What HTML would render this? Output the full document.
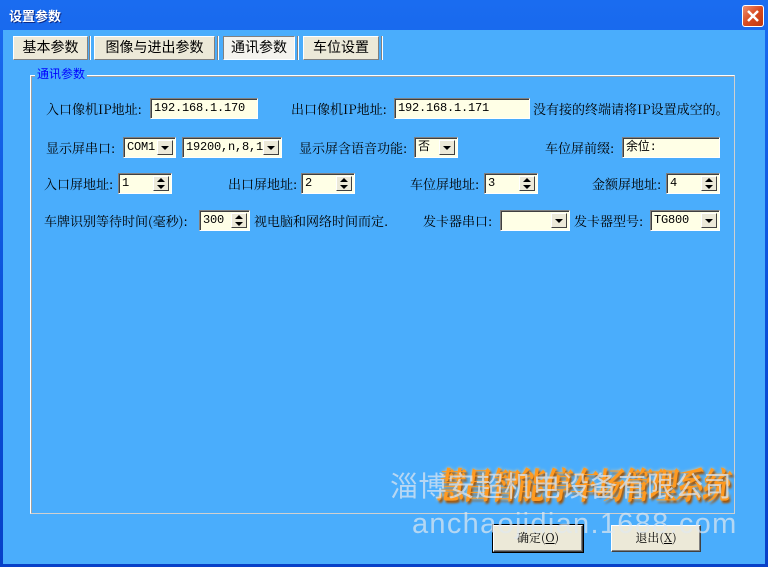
<!DOCTYPE html>
<html><head><meta charset="utf-8">
<style>
*{margin:0;padding:0;box-sizing:border-box}
body{width:768px;height:567px;overflow:hidden;background:#0842d8;font-family:"Liberation Sans","Noto Serif CJK SC","Noto Sans CJK SC",sans-serif;font-size:12px;position:relative}
.win{position:absolute;left:0;top:0;width:768px;height:567px;background:linear-gradient(#1a6cf0,#0a4fd8 60%,#0840c8);}
.title{position:absolute;left:9px;top:6px;color:#fff;font-weight:bold;font-size:13px;font-family:"Liberation Sans","Noto Sans CJK SC",sans-serif;text-shadow:1px 1px #0a2a8a}
.close{position:absolute;left:742px;top:5px;width:22px;height:22px;border:1px solid #fff;border-radius:3px;background:linear-gradient(135deg,#f09070,#d84a20 50%,#c03810);}
.close svg{position:absolute;left:3px;top:3px}
.client{position:absolute;left:3px;top:30px;width:762px;height:534px;background:#4aadfc}
.lbl{position:absolute;white-space:nowrap;color:#000;font-family:"Noto Serif CJK SC","Liberation Serif",serif;font-size:13px;line-height:14px}
.tab{position:absolute;top:36px;height:24px;background:#ece9d8;border:1px solid;border-color:#fff #808080 #808080 #fff;font-family:"Noto Sans CJK SC",sans-serif;font-size:14px;line-height:20px;text-align:center;color:#000}
.tab.sel{border-color:#808080 #fff #fff #808080;background:#f4f3ee}
.sep{position:absolute;top:36px;width:2px;height:24px;border-left:1px solid #808080;border-right:1px solid #fff}
.box{position:absolute;left:30px;top:75px;width:705px;height:439px;border:1px solid;border-color:#fff #d0d0d0 #d0d0d0 #fff;box-shadow:inset 1px 1px 0 #a0a0a0}
.leg{position:absolute;left:35px;top:67px;background:#4aadfc;padding:0 2px;color:#0000ff;font-family:"Noto Sans CJK SC",sans-serif;font-size:12px;line-height:14px}
.in{position:absolute;height:21px;background:#ffffe6;border:1px solid;border-color:#808080 #fff #fff #808080;box-shadow:inset 1px 1px 0 #404040;font-family:"Liberation Mono",monospace;font-size:12px;letter-spacing:-0.2px;line-height:18px;padding-left:3px;color:#000;white-space:nowrap;overflow:hidden}
.btn{position:absolute;top:2px;right:2px;width:16px;height:15px;background:#ece9d8;border:1px solid;border-color:#fff #404040 #404040 #fff}
.dn:after{content:"";position:absolute;left:3px;top:5px;border:4px solid transparent;border-top:4px solid #000;border-bottom:0}
.sp:before{content:"";position:absolute;left:3px;top:1px;border:4px solid transparent;border-bottom:4px solid #000;border-top:0}
.sp:after{content:"";position:absolute;left:3px;top:8px;border:4px solid transparent;border-top:4px solid #000;border-bottom:0}
.pb{position:absolute;top:525px;width:90px;height:27px;background:#ece9d8;border:1px solid;border-color:#fff #404040 #404040 #fff;box-shadow:inset -1px -1px 0 #808080;font-family:"Noto Serif CJK SC",serif;font-size:12px;text-align:center;line-height:24px}
.pb.def{outline:1px solid #000}
.wm{position:absolute;color:rgba(220,230,240,.75);white-space:nowrap;font-family:"Noto Sans CJK SC",sans-serif}
.logo{position:absolute;left:442px;top:458px;font-size:28px;color:#ff9a20;font-family:"Noto Serif CJK SC",serif;font-weight:bold;letter-spacing:-1.5px;text-shadow:2px 2px 2px #a05000,0 0 3px #ffd080;white-space:nowrap;transform:skewX(-8deg) scaleY(1.3);transform-origin:left top}
</style></head><body>
<div class="win"></div>
<div class="title">设置参数</div>
<div class="close"><svg width="14" height="14"><path d="M2 2L12 12M12 2L2 12" stroke="#fff" stroke-width="2.5"/></svg></div>
<div class="client"></div>

<div class="tab" style="left:13px;width:75px">基本参数</div><div class="sep" style="left:89px"></div>
<div class="tab" style="left:94px;width:121px">图像与进出参数</div><div class="sep" style="left:217px"></div>
<div class="tab sel" style="left:223px;width:72px">通讯参数</div><div class="sep" style="left:297px"></div>
<div class="tab" style="left:303px;width:76px">车位设置</div><div class="sep" style="left:381px"></div>

<div class="box"></div>
<div class="leg">通讯参数</div>

<div class="lbl" style="left:46px;top:102px">入口像机IP地址:</div>
<div class="in" style="left:150px;top:98px;width:108px">192.168.1.170</div>
<div class="lbl" style="left:291px;top:102px">出口像机IP地址:</div>
<div class="in" style="left:394px;top:98px;width:136px">192.168.1.171</div>
<div class="lbl" style="left:533px;top:102px">没有接的终端请将IP设置成空的。</div>

<div class="lbl" style="left:46px;top:141px">显示屏串口:</div>
<div class="in" style="left:123px;top:137px;width:53px">COM1<div class="btn dn"></div></div>
<div class="in" style="left:182px;top:137px;width:100px">19200,n,8,1<div class="btn dn"></div></div>
<div class="lbl" style="left:299px;top:141px">显示屏含语音功能:</div>
<div class="in" style="left:414px;top:137px;width:44px">否<div class="btn dn"></div></div>
<div class="lbl" style="left:545px;top:141px">车位屏前缀:</div>
<div class="in" style="left:622px;top:137px;width:98px">余位:</div>

<div class="lbl" style="left:44px;top:177px">入口屏地址:</div>
<div class="in" style="left:118px;top:173px;width:54px">1<div class="btn sp"></div></div>
<div class="lbl" style="left:228px;top:177px">出口屏地址:</div>
<div class="in" style="left:301px;top:173px;width:54px">2<div class="btn sp"></div></div>
<div class="lbl" style="left:410px;top:177px">车位屏地址:</div>
<div class="in" style="left:484px;top:173px;width:54px">3<div class="btn sp"></div></div>
<div class="lbl" style="left:592px;top:177px">金额屏地址:</div>
<div class="in" style="left:666px;top:173px;width:54px">4<div class="btn sp"></div></div>

<div class="lbl" style="left:44px;top:214px">车牌识别等待时间(毫秒):</div>
<div class="in" style="left:199px;top:210px;width:51px">300<div class="btn sp"></div></div>
<div class="lbl" style="left:254px;top:214px">视电脑和网络时间而定.</div>
<div class="lbl" style="left:423px;top:214px">发卡器串口:</div>
<div class="in" style="left:500px;top:210px;width:70px"><div class="btn dn"></div></div>
<div class="lbl" style="left:574px;top:214px">发卡器型号:</div>
<div class="in" style="left:650px;top:210px;width:70px">TG800<div class="btn dn"></div></div>

<div class="logo">慧昌智能停车场管理系统</div>
<div class="wm" style="left:390px;top:465px;font-size:28px;letter-spacing:0.5px">淄博安超机电设备有限公司</div>

<div class="pb def" style="left:493px">确定(<u>O</u>)</div>
<div class="pb" style="left:611px">退出(<u>X</u>)</div>
<div class="wm" style="left:412px;top:508px;font-size:29px;font-family:'Liberation Sans',sans-serif;letter-spacing:1.3px;color:rgba(225,232,240,.7)">anchaojidian.1688.com</div>
</body></html>
